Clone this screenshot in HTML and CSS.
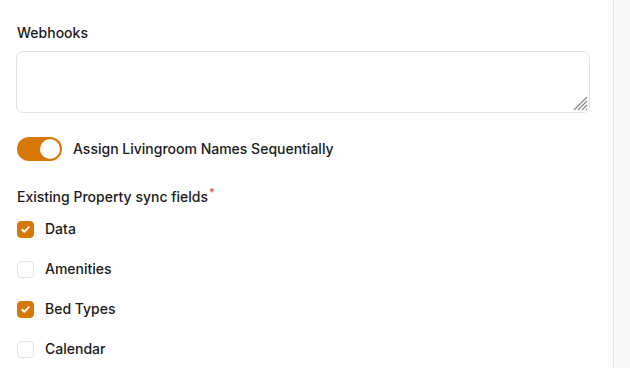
FILE: index.html
```html
<!doctype html>
<html>
  <head>
    <title>Property settings</title>
    <meta charset="utf-8">
    <meta name="viewport" content="width=device-width, initial-scale=1">
    <link rel="stylesheet" href="styles.css">
  </head>
  <body>
    <div class="layout">
      <main class="form">
        <label class="field">
          <span class="label">Webhooks</span>
          <textarea name="webhooks"></textarea>
        </label>

        <label class="toggle-row">
          <input type="checkbox" class="toggle" checked>
          <span class="toggle-label">Assign Livingroom Names Sequentially</span>
        </label>

        <fieldset class="sync">
          <legend class="label">Existing Property sync fields<sup class="req">*</sup></legend>
          <label class="check"><input type="checkbox" checked><span>Data</span></label>
          <label class="check"><input type="checkbox"><span>Amenities</span></label>
          <label class="check"><input type="checkbox" checked><span>Bed Types</span></label>
          <label class="check"><input type="checkbox"><span>Calendar</span></label>
        </fieldset>
      </main>
      <aside class="side"></aside>
    </div>
  </body>
</html>
```

FILE: styles.css
```css
html, body {
  margin: 0;
  height: 100%;
}
body {
  font-family: Inter, "Noto Sans", sans-serif;
  font-size: 14px;
  line-height: 20px;
  color: #1a1a1a;
  background: white;
  overflow: hidden;
}
.layout {
  display: flex;
  height: 100%;
}
.form {
  width: 574px;
  padding: 23px 23px 0 16px;
  display: flex;
  flex-direction: column;
}
.side {
  flex: 1;
  background: #f8f8f8;
  border-left: 1px solid #e6e6e6;
}
.label {
  font-weight: 500;
  padding-left: 1px;
}
.field {
  display: flex;
  flex-direction: column;
  gap: 8px;
}
/* hatch drawn by hand so it looks the same everywhere */
textarea {
  height: 62px;
  box-sizing: border-box;
  border: 1px solid #e2e2e2;
  border-radius: 7px;
  font: inherit;
  padding: 8px 12px;
  resize: none;
  outline: none;
  background: white url("data:image/svg+xml,%3Csvg xmlns='http://www.w3.org/2000/svg' width='16' height='16'%3E%3Cg stroke='%23888' stroke-width='1.2'%3E%3Cpath d='M2 15L15 2M6 15L15 6M10 15L15 10M14 15L15 14'/%3E%3C/g%3E%3C/svg%3E") right 1px bottom 1px / 16px 16px no-repeat;
}
.toggle-row {
  display: flex;
  align-items: center;
  gap: 11px;
  margin-top: 24px;
  padding-left: 1px;
}
.toggle-label {
  font-weight: 500;
}
.toggle {
  appearance: none;
  margin: 0;
  width: 45px;
  height: 24px;
  border-radius: 12px;
  background: #e2e8f0;
  position: relative;
  cursor: pointer;
}
.toggle::after {
  content: "";
  position: absolute;
  top: 2px;
  left: 2px;
  width: 20px;
  height: 20px;
  border-radius: 50%;
  background: white;
}
.toggle:checked {
  background: #d97706;
}
.toggle:checked::after {
  left: 23px;
}
.sync {
  border: 0;
  margin: 26px 0 0;
  padding: 0;
  display: flex;
  flex-direction: column;
  gap: 20px;
}
.sync legend {
  padding: 0 0 0 1px;
  margin-bottom: 12px;
}
.req {
  color: #e53e3e;
  font-size: 11px;
  line-height: 0;
  vertical-align: 6px;
  margin-left: 1px;
}
.check {
  display: flex;
  align-items: center;
  gap: 11px;
  padding-left: 1px;
  font-weight: 500;
}
.check input {
  appearance: none;
  margin: 0;
  width: 17px;
  height: 17px;
  border: 1px solid #e2e2e2;
  border-radius: 4px;
  background: white;
}
.check input:checked {
  border-color: #d97706;
  background: #d97706 url("data:image/svg+xml,%3Csvg xmlns='http://www.w3.org/2000/svg' viewBox='0 0 16 16'%3E%3Cpath d='M4.5 8.3l2.3 2.2 4.7-5' fill='none' stroke='white' stroke-width='2' stroke-linecap='round' stroke-linejoin='round'/%3E%3C/svg%3E") center / 15px no-repeat;
}
```
